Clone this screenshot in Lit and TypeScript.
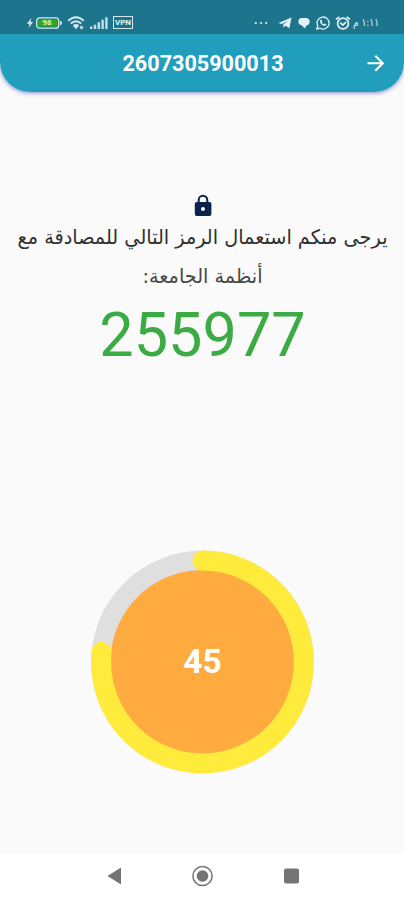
import { LitElement, html, svg, css } from "lit";
import { customElement, property } from "lit/decorators.js";

@customElement("status-bar")
class StatusBar extends LitElement {
  static styles = css`
    :host { display: flex; justify-content: space-between; height: 34px; box-sizing: border-box;
      padding: 12px 25px 0 26px; background: #1d758d; color: #e4f1f5; }
    .group { display: flex; align-items: center; height: 21px; }
    svg { display: block; flex: none; }
    .time { font: 11px/21px "DejaVu Sans", sans-serif; direction: rtl; white-space: nowrap; width: 27px; }
    .time svg { overflow: visible; }
    .vpn { box-sizing: border-box; width: 20px; height: 13px; border: 1.5px solid #d3e6ec;
      font: bold 8px/11px Roboto, sans-serif; text-align: center; margin-left: 5px; }
    .battery { position: relative; }
    .level { position: absolute; inset: 0 4px 0 0; font: bold 8px/12px Roboto, sans-serif; text-align: center; color: #d8f5c6; }
    .g1 { margin-left: 6px; } .g2 { margin-left: 5px; }
    .ml10 { margin-left: 10px; } .ml4 { margin-left: 4px; } .ml2 { margin-left: 1px; }
  `;
  render() {
    return html`
      <div class="group">
        <svg width="8" height="12" viewBox="0 0 8 12"><path d="M5.4 1 .8 6.8h2.7L2.5 11l4.7-6H4.5z" fill="#d8eaf0"/></svg>
        <div class="battery ml2">
          <svg width="28" height="12" viewBox="0 0 28 12">
            <rect x="1.7" y=".8" width="22" height="10.4" rx="3" fill="none" stroke="#d8eaf0" stroke-width="1.3"/>
            <rect x="3.3" y="2.4" width="18.8" height="7.2" rx="1.6" fill="#35a915"/>
            <path d="M25 3.8q2 .2 2 2.2t-2 2.2z" fill="#d8eaf0"/>
          </svg>
          <span class="level">98</span>
        </div>
        <svg class="ml4" width="19" height="14" viewBox="0 0 19 14" fill="none" stroke="#d8eaf0" stroke-width="1.9">
          <path d="M1.2 4.8Q9 -2.2 16.8 4.8M3.8 7.5q5.2-4.6 10.4 0M6.5 10q2.5-2.2 5 0"/>
          <path d="m6.4 10 2.6 3.3 2.6-3.3q-2.6-2-5.2 0z" fill="#d8eaf0" stroke="none"/>
          <circle cx="14.5" cy="11.5" r="1.7" fill="#b9d8e1" stroke="none"/>
        </svg>
        <svg class="ml4" width="18" height="12" viewBox="0 0 18 12" fill="#c6dfe7">
          <path d="M0 9.5h2.4V12H0zM3.8 7.7h2.4V12H3.8zM7.6 5.3H10V12H7.6zM11.4 2.8h2.4V12h-2.4zM15.2.3h2.4V12h-2.4z"/>
        </svg>
        <div class="vpn">VPN</div>
      </div>
      <div class="group">
        <svg width="14" height="4" viewBox="0 0 14 4" fill="currentColor"><circle cx="1.8" cy="2" r="1.1"/><circle cx="7" cy="2" r="1.1"/><circle cx="12.2" cy="2" r="1.1"/></svg>
        <svg class="ml10" width="14" height="12" viewBox="0 0 14 12" fill="currentColor"><path d="M.3 6.1 13.5.6 11.4 11.3 7.5 8.7 5.6 10.6 5.2 7.6 10.4 3.4 4 7.1z"/></svg>
        <svg class="g1" width="12" height="12" viewBox="0 0 12 12" fill="currentColor"><path d="M3.3 1h5.2Q11.7 1.4 11.7 4.8 11.5 8 8.1 8.8L7 11.4 3.6 8.3Q.3 7.2.4 4.4.7 1.4 3.3 1z"/></svg>
        <svg class="g1" width="14" height="14" viewBox="0 0 14 14" fill="none" stroke="currentColor" stroke-width="1.3">
          <path d="m.9 13 .9-3.2A6 6 0 1 1 4.1 12.2z"/>
          <path d="M4.5 3.7c-1.7 2.6 2.3 7.2 5.3 5.9l.4-1.3-1.7-.8-.8.8q-1.5-.7-2-2.1l.6-.8-.8-1.7z" fill="currentColor" stroke="none"/>
        </svg>
        <svg class="g2" width="16" height="14" viewBox="0 0 16 14" fill="none" stroke="currentColor" stroke-width="1.7">
          <circle cx="8" cy="7.5" r="5.4"/><path d="M1 3.4 4.2.8M15 3.4 11.8.8M5.3 6.7l2.5 2.4 3.2-2.9"/>
        </svg>
        <div class="time ml2">
          <svg width="27" height="21" viewBox="0 0 27 21"><text x="27" y="13.5" fill="currentColor" textLength="26" lengthAdjust="spacingAndGlyphs">١:١١ م</text></svg>
        </div>
      </div>`;
  }
}

@customElement("countdown-ring")
class CountdownRing extends LitElement {
  @property({ type: Number }) value = 45;
  @property({ type: Number }) fraction = 0.765;
  static styles = css`
    :host { display: grid; width: 223px; height: 224px; place-items: center; }
    svg, span { grid-area: 1 / 1; }
    span { font: bold 33.5px/40px Roboto, sans-serif; color: #fff; }
  `;
  render() {
    const length = 2 * Math.PI * 101.4;
    return html`
      <svg width="223" height="224" viewBox="-111.5 -112 223 224">
        <circle r="101.4" fill="none" stroke="#dfdfdf" stroke-width="20"/>
        <circle r="92" fill="#ffab40"/>
        <circle r="101.4" fill="none" stroke="#ffeb3b" stroke-width="20" stroke-linecap="round"
          stroke-dasharray="${length * this.fraction} ${length}" transform="rotate(-90)"/>
      </svg>
      <span>${this.value}</span>`;
  }
}

@customElement("app-root")
class AppRoot extends LitElement {
  static styles = css`
    :host { display: flex; flex-direction: column; width: 404px; height: 900px; overflow: hidden; background: #fafafa; }
    .top { height: 92px; overflow: hidden; border-radius: 0 0 30px 30px; background: #229ebd; }
    .shade { flex: none; border-radius: 0 0 30px 30px; box-shadow: 0 1px 4px #4d55b5b0; }
    header { display: grid; grid-template-columns: 40px 1fr 40px; align-items: center; height: 58px; }
    h1 { grid-column: 2; margin: 0; padding: 1px 0 0 2px; text-align: center; font: bold 21.6px/26px Roboto, sans-serif; color: #fff; }
    header svg { display: block; margin-left: 2px; }
    main { flex: 1; display: flex; flex-direction: column; align-items: center; }
    .lock { margin-top: 102px; margin-left: 1px; flex: none; }
    .message { flex: none; display: block; font: 20px "DejaVu Sans", sans-serif; direction: rtl; }
    .line1 { fill: #303030; }
    .line2 { fill: #484848; }
    .code { font: 61.2px/68px Roboto, sans-serif; color: #3cab43; height: 72px; margin-left: 1px; }
    countdown-ring { margin-top: 177px; margin-left: 1px; }
    nav { flex: none; height: 46px; background: #fff; }
    nav svg { display: block; }
  `;
  render() {
    return html`
      <div class="shade"><div class="top">
        <status-bar></status-bar>
        <header>
          <h1>2607305900013</h1>
          <svg width="20" height="18" viewBox="0 0 20 18" fill="none" stroke="#fff" stroke-width="2.1"><path d="M1.5 9.3h15M9.3 1.8l7.5 7.5-7.5 7.5"/></svg>
        </header>
      </div></div>
      <main>
        <svg class="lock" width="18" height="23" viewBox="0 0 18 23">
          <path d="M4.7 10V6a4.3 4.3 0 0 1 8.6 0v4" fill="none" stroke="#0b2349" stroke-width="2"/>
          <rect x=".8" y="8" width="16.6" height="14" rx="2" fill="#0b2349"/><circle cx="9" cy="15" r="2" fill="#fafafa"/>
        </svg>
        <svg class="message" width="404" height="84" viewBox="0 0 404 84" text-anchor="middle">
          ${svg`<text class="line1" x="202.5" y="27" textLength="370" lengthAdjust="spacingAndGlyphs">يرجى منكم استعمال الرمز التالي للمصادقة مع</text>
          <text class="line2" x="202.5" y="65.5" textLength="120" lengthAdjust="spacingAndGlyphs">أنظمة الجامعة:</text>`}
        </svg>
        <div class="code">255977</div>
        <countdown-ring></countdown-ring>
      </main>
      <nav>
        <svg width="404" height="46" viewBox="0 0 404 46" fill="#747474">
          <path d="M107.5 22 121 13.6v17z"/>
          <circle cx="202.5" cy="22" r="9.6" fill="none" stroke="#747474" stroke-width="1.5"/><circle cx="202.5" cy="22" r="5.8"/>
          <rect x="284" y="14.5" width="15" height="15" rx="2.2"/>
        </svg>
      </nav>`;
  }
}
